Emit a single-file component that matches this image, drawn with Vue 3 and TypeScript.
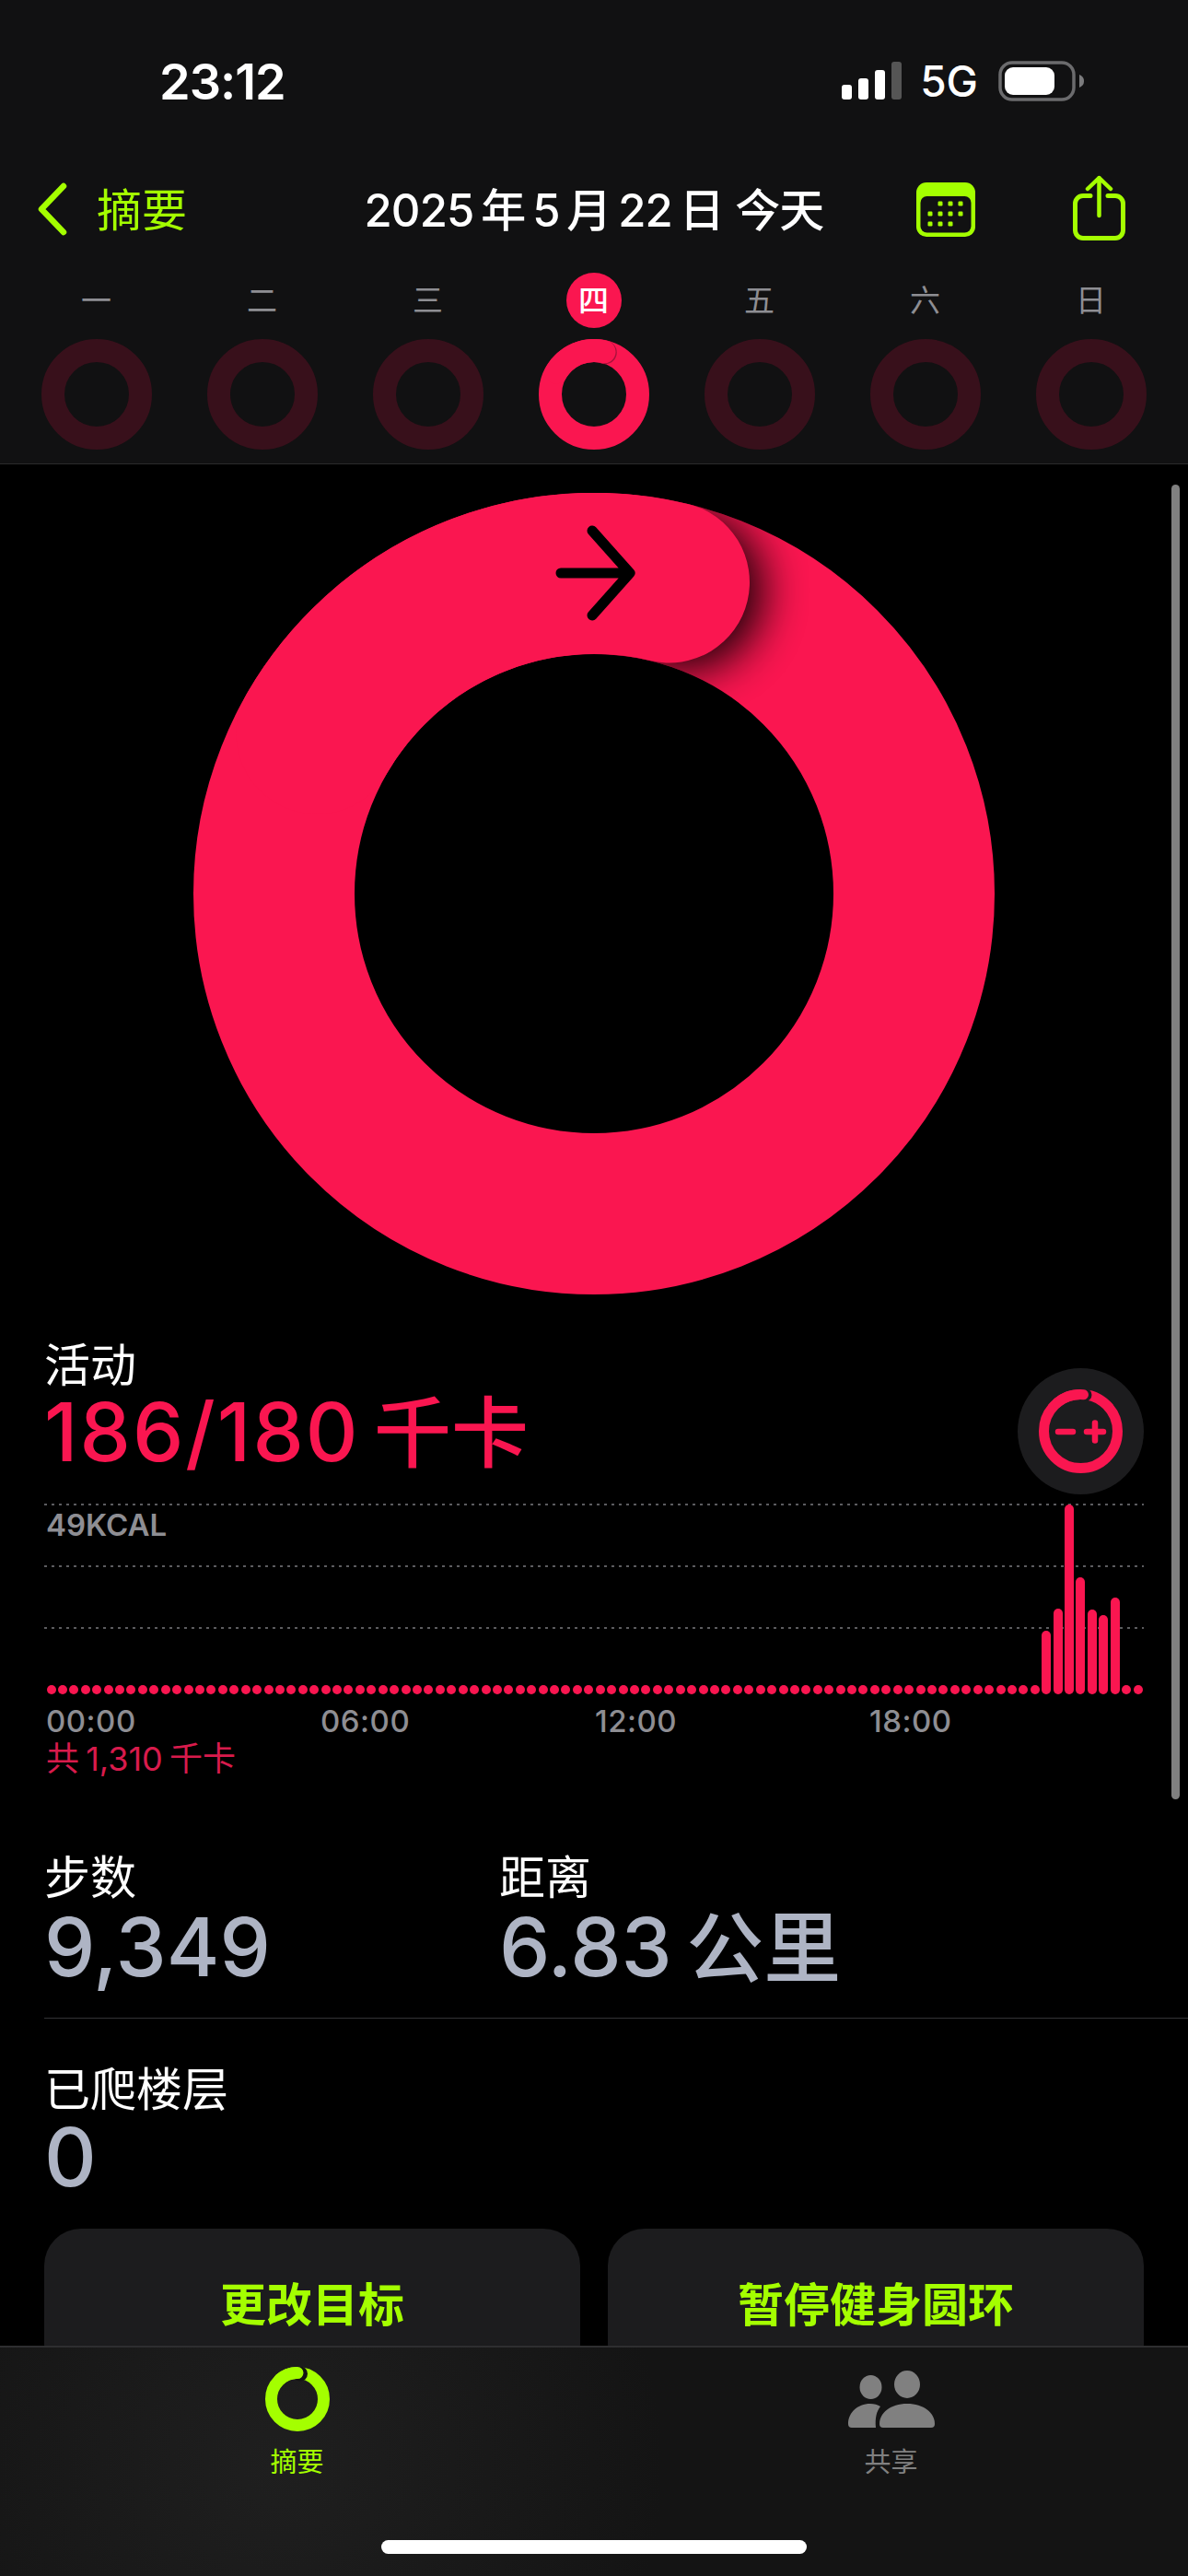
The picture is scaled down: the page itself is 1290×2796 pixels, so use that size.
<script setup lang="ts">
const days = ['一', '二', '三', '四', '五', '六', '日']
const todayIndex = 3

const activeBars: Record<number, number> = {
  87: 69, 88: 93, 89: 206, 90: 127, 91: 92, 92: 86, 93: 105,
}
const samples = Array.from({ length: 96 }, (_, i) => activeBars[i] ?? 10)
const ticks = ['00:00', '06:00', '12:00', '18:00']
const calendarDots = [
  [26, 23], [37, 23], [48, 23],
  [15, 34], [26, 34], [37, 34], [48, 34],
  [15, 45], [26, 45], [37, 45],
]
</script>

<template>
  <div class="page">
    <header class="top">
      <div class="status">
        <span class="clock">23:12</span>
        <div class="status-right">
          <svg class="signal" width="66" height="42" viewBox="0 0 66 42">
            <rect x="0" y="25" width="11" height="16" rx="3" fill="#fff" />
            <rect x="18" y="18" width="11" height="23" rx="3" fill="#fff" />
            <rect x="36" y="9" width="11" height="32" rx="3" fill="#fff" />
            <rect x="54" y="0" width="11" height="41" rx="3" fill="#555" />
          </svg>
          <span class="network">5G</span>
          <svg class="battery" width="94" height="44" viewBox="0 0 94 44">
            <rect x="2" y="2" width="80" height="40" rx="13" fill="none" stroke="#6b6b6d" stroke-width="3.5" />
            <rect x="7" y="7" width="54" height="30" rx="9" fill="#fff" />
            <path d="M88 15 C92 17 93 19 93 22 C93 25 92 27 88 29 Z" fill="#7b7b7d" />
          </svg>
        </div>
      </div>

      <nav class="nav">
        <div class="back">
          <svg width="33" height="58" viewBox="0 0 33 58">
            <path d="M29 4 L5 29 L29 54" fill="none" stroke="#a4ff00" stroke-width="6.5" stroke-linecap="round" stroke-linejoin="round" />
          </svg>
          <span class="nudge">摘要</span>
        </div>
        <div class="title nudge">2025&#8201;年&#8201;5&#8201;月&#8201;22&#8201;日 今天</div>
        <div class="actions">
          <svg width="64" height="59" viewBox="0 0 64 59">
            <rect width="64" height="59" rx="11" fill="#a4ff00" />
            <rect x="4.5" y="15" width="55" height="39.5" rx="7" fill="#111112" />
            <rect v-for="([x, y], i) in calendarDots" :key="i" :x="x - 2.5" :y="y - 2.5" width="5" height="5" rx="1.2" fill="#a4ff00" />
          </svg>
          <svg class="share" width="57" height="71" viewBox="0 0 57 71">
            <path d="M19 22.5 H11 a8.5 8.5 0 0 0 -8.5 8.5 V60 a8.5 8.5 0 0 0 8.5 8.5 H46 a8.5 8.5 0 0 0 8.5 -8.5 V31 a8.5 8.5 0 0 0 -8.5 -8.5 H38" fill="none" stroke="#a4ff00" stroke-width="5" stroke-linecap="round" />
            <path d="M28.5 3 V44 M16 15 L28.5 3 L41 15" fill="none" stroke="#a4ff00" stroke-width="4.5" stroke-linecap="round" stroke-linejoin="round" />
          </svg>
        </div>
      </nav>

      <div class="week">
        <div v-for="(day, i) in days" :key="day" class="day">
          <span class="day-label" :class="{ today: i === todayIndex }">{{ day }}</span>
          <svg width="120" height="120" viewBox="0 0 120 120">
            <template v-if="i === todayIndex">
              <circle cx="60" cy="60" r="47.5" fill="none" stroke="#fa1650" stroke-width="25" />
              <circle cx="72" cy="14.5" r="12.8" fill="#a8123c" />
              <path d="M19 36 A47.5 47.5 0 0 1 71 13.8" fill="none" stroke="#fa1650" stroke-width="25" stroke-linecap="round" />
            </template>
            <circle v-else cx="60" cy="60" r="47.5" fill="none" stroke="#38101b" stroke-width="25" />
          </svg>
        </div>
      </div>
    </header>

    <main class="content">
      <div class="scrollbar"></div>

      <svg class="big-ring" width="870" height="870" viewBox="0 0 870 870">
        <defs>
          <mask id="ring-mask" maskUnits="userSpaceOnUse" x="0" y="0" width="870" height="870">
            <circle cx="435" cy="435" r="347.5" fill="none" stroke="#fff" stroke-width="175" />
          </mask>
          <filter id="cap-blur" x="-50%" y="-50%" width="200%" height="200%">
            <feGaussianBlur stdDeviation="24" />
          </filter>
        </defs>
        <circle cx="435" cy="435" r="347.5" fill="none" stroke="#fa1650" stroke-width="175" />
        <g mask="url(#ring-mask)">
          <circle cx="532" cy="106" r="87.5" fill="#000" opacity="0.9" filter="url(#cap-blur)" />
        </g>
        <path d="M134 261.25 A347.5 347.5 0 0 1 516.5 97" fill="none" stroke="#fa1650" stroke-width="175" stroke-linecap="round" />
        <path d="M399 87 H474 M433 41 L474 87 L433 133" fill="none" stroke="#000" stroke-width="11" stroke-linecap="round" stroke-linejoin="round" />
      </svg>

      <section class="activity">
        <div class="activity-head">
          <div>
            <div class="label">活动</div>
            <div class="value move">186/180 <span class="unit">千卡</span></div>
          </div>
          <div class="goal-btn">
            <svg width="91" height="91" viewBox="0 0 91 91">
              <circle cx="45.5" cy="45.5" r="40" fill="none" stroke="#fa1650" stroke-width="11" />
              <circle cx="50.5" cy="6" r="7" fill="#1c1c1e" />
              <path d="M20 14.5 A40 40 0 0 1 48.5 5.7" fill="none" stroke="#fa1650" stroke-width="11" stroke-linecap="round" />
              <path d="M21 46 H37 M52 46 H70 M61 36.5 V55.5" fill="none" stroke="#fa1650" stroke-width="6.5" stroke-linecap="round" />
            </svg>
          </div>
        </div>

        <div class="chart">
          <div class="grid-lines">
            <div class="grid-line"><span class="peak">49KCAL</span></div>
            <div class="grid-line"></div>
            <div class="grid-line"></div>
          </div>
          <div class="bars">
            <span v-for="(h, i) in samples" :key="i" class="bar" :style="{ height: h + 'px' }"></span>
          </div>
        </div>
        <div class="ticks">
          <span v-for="t in ticks" :key="t">{{ t }}</span>
        </div>
        <div class="total">共 1,310 千卡</div>
      </section>

      <section class="stats">
        <div class="stat">
          <div class="label">步数</div>
          <div class="value">9,349</div>
        </div>
        <div class="stat">
          <div class="label">距离</div>
          <div class="value">6.83 <span class="unit">公里</span></div>
        </div>
      </section>
      <div class="divider"></div>
      <section class="floors">
        <div class="label">已爬楼层</div>
        <div class="value">0</div>
      </section>

      <div class="buttons">
        <button class="btn">更改目标</button>
        <button class="btn">暂停健身圆环</button>
      </div>
    </main>

    <footer class="tabbar">
      <div class="tabs">
        <div class="tab active">
          <svg width="94" height="70" viewBox="0 0 94 70">
            <circle cx="47" cy="35" r="28.5" fill="none" stroke="#a4ff00" stroke-width="13" />
            <circle cx="50" cy="7.5" r="8" fill="#141414" />
            <path d="M28 13.5 A28.5 28.5 0 0 1 47 6.5" fill="none" stroke="#a4ff00" stroke-width="13" stroke-linecap="round" />
          </svg>
          <span>摘要</span>
        </div>
        <div class="tab">
          <svg width="94" height="70" viewBox="0 -4 94 70">
            <ellipse cx="64" cy="15" rx="14" ry="15" fill="#808080" />
            <ellipse cx="24.5" cy="18" rx="12" ry="13" fill="#808080" />
            <path d="M34 58 C34 46 46 36 64 36 C82 36 94 46 94 58 Q94 62 90 62 H38 Q34 62 34 58 Z" fill="#808080" />
            <path d="M0 58 C0 46 10 36 24 36 C28 36 32 37 35 39 C31 44 29 51 30 62 H4 Q0 62 0 58 Z" fill="#808080" />
          </svg>
          <span>共享</span>
        </div>
      </div>
      <div class="home-indicator"></div>
    </footer>
  </div>
</template>

<style scoped>
.page {
  width: 1290px;
  height: 2796px;
  display: flex;
  flex-direction: column;
  overflow: hidden;
  background: #000;
  color: #fff;
  font-family: Inter, "Noto Sans CJK SC", sans-serif;
}

.top {
  height: 504px;
  flex: none;
  box-sizing: border-box;
  background: #111112;
  border-bottom: 1px solid #2a2a2c;
}
.status {
  height: 176px;
  display: flex;
  align-items: center;
  justify-content: space-between;
  padding: 0 112px 0 173px;
}
.clock { font-size: 54px; font-weight: 600; letter-spacing: -1px; }
.status-right { display: flex; align-items: center; }
.signal { margin-right: 19px; }
.network { font-size: 46px; font-weight: 500; margin-right: 22px; }

.nav {
  height: 102px;
  display: grid;
  grid-template-columns: 1fr auto 1fr;
  align-items: center;
  padding: 0 40px;
}
.nudge { margin-bottom: 6px; }
.back { display: flex; align-items: center; gap: 32px; color: #a4ff00; font-size: 49px; }
.title { font-size: 49px; font-weight: 500; letter-spacing: -0.8px; }
.actions { display: flex; align-items: center; justify-content: flex-end; gap: 106px; padding-right: 28px; }
.share { margin-bottom: 3px; }

.week {
  display: grid;
  grid-template-columns: repeat(7, 180px);
  padding: 18px 0 0 14.5px;
}
.day { display: flex; flex-direction: column; align-items: center; gap: 12px; }
.day-label {
  width: 60px;
  height: 60px;
  box-sizing: border-box;
  padding-bottom: 4px;
  border-radius: 50%;
  display: flex;
  align-items: center;
  justify-content: center;
  font-size: 33px;
  color: #8e8e93;
}
.day-label.today { background: #fa1650; color: #fff; font-weight: 500; }

.content { position: relative; flex: 1; min-height: 0; overflow: hidden; }
.scrollbar {
  position: absolute;
  top: 22px;
  right: 9px;
  width: 9px;
  height: 1427px;
  border-radius: 5px;
  background: #808080;
}
.big-ring { display: block; margin: 31px auto 0; }

.label { font-size: 50px; line-height: 56px; }
.value { font-size: 88px; line-height: 90px; font-weight: 500; color: #aeb4c4; word-spacing: -8px; }
.value.move { color: #fa1650; letter-spacing: 2px; line-height: 88px; word-spacing: -10px; }
.unit { font-size: 84px; line-height: 0; letter-spacing: 0; }

.activity { padding: 49px 48px 0; }
.activity-head { height: 168px; display: flex; justify-content: space-between; }
.goal-btn {
  width: 137px;
  height: 137px;
  margin-top: 31px;
  border-radius: 50%;
  background: #1c1c1e;
  display: flex;
  align-items: center;
  justify-content: center;
}

.chart { display: grid; height: 207px; margin-top: 10px; }
.grid-lines, .bars { grid-area: 1 / 1; }
.grid-lines { display: flex; flex-direction: column; gap: 65px; }
.grid-line {
  height: 67px;
  margin-bottom: -65px;
  padding-top: 5px;
  box-sizing: border-box;
  background: linear-gradient(to right, #5c5c5f 3px, transparent 3px) 0 0 / 8px 2px repeat-x;
}
.peak { display: block; padding-left: 2px; font-size: 33px; line-height: 36px; font-weight: 600; color: #8e8e93; }
.bars {
  display: flex;
  align-items: flex-end;
  justify-content: space-between;
  padding: 0 1px 0 2.5px;
}
.bar { width: 10px; border-radius: 5px; background: #fa1650; }

.ticks {
  display: grid;
  grid-template-columns: repeat(4, 298px);
  margin-top: 9px;
  padding-left: 2px;
  font-size: 33px;
  line-height: 40px;
  font-weight: 500;
  letter-spacing: 0.5px;
  color: #8e8e93;
}
.total { margin-top: 1px; padding-left: 2px; font-size: 36px; line-height: 40px; color: #d81b4c; word-spacing: -3px; }

.stats { display: flex; padding: 81px 0 0 48px; }
.stat { width: 494px; }
.stat .value { margin-top: 2px; }
.divider { height: 1px; margin: 32px 0 0 48px; background: #333335; }
.floors { padding: 49px 48px 0; }

.buttons {
  display: grid;
  grid-template-columns: 1fr 1fr;
  gap: 30px;
  padding: 33px 48px 0;
}
.btn {
  height: 164px;
  padding: 0 0 6px;
  border: 0;
  border-radius: 40px;
  background: #1c1c1e;
  color: #a4ff00;
  font-family: inherit;
  font-size: 50px;
  font-weight: 700;
}

.tabbar {
  height: 250px;
  flex: none;
  box-sizing: border-box;
  display: flex;
  flex-direction: column;
  align-items: center;
  border-top: 2px solid #2e2e30;
  background: radial-gradient(circle at 300px 130px, #1f1f1f 0, #141414 420px);
}
.tabs { width: 100%; display: grid; grid-template-columns: 1fr 1fr; padding-top: 21px; }
.tab {
  display: flex;
  flex-direction: column;
  align-items: center;
  gap: 16px;
  font-size: 29px;
  line-height: 36px;
  color: #808080;
}
.tab.active { color: #a4ff00; }
.home-indicator {
  width: 462px;
  height: 15px;
  margin-top: 66px;
  border-radius: 8px;
  background: #fff;
}
</style>
